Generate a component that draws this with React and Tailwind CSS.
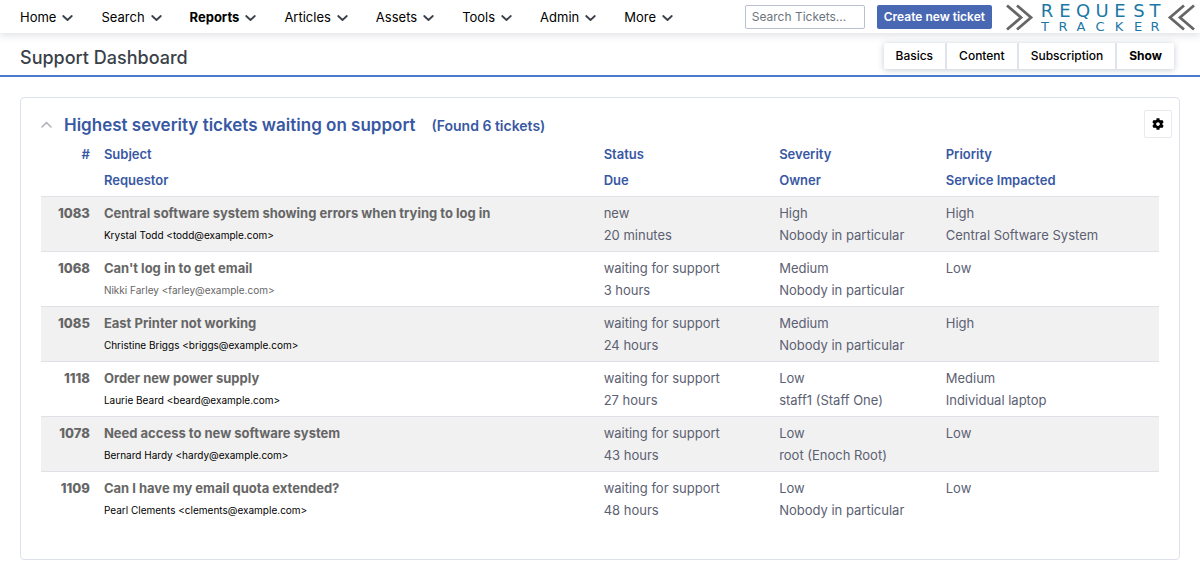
import React, { useState } from 'react';
import { FaCog } from 'react-icons/fa';

const menu = ['Home', 'Search', 'Reports', 'Articles', 'Assets', 'Tools', 'Admin', 'More'];
const pageTabs = ['Basics', 'Content', 'Subscription', 'Show'];

const tickets = [
  { id: 1083, subject: 'Central software system showing errors when trying to log in', requestor: 'Krystal Todd <todd@example.com>', status: 'new', due: '20 minutes', severity: 'High', owner: 'Nobody in particular', priority: 'High', service: 'Central Software System' },
  { id: 1068, subject: "Can't log in to get email", requestor: 'Nikki Farley <farley@example.com>', muted: true, status: 'waiting for support', due: '3 hours', severity: 'Medium', owner: 'Nobody in particular', priority: 'Low', service: '' },
  { id: 1085, subject: 'East Printer not working', requestor: 'Christine Briggs <briggs@example.com>', status: 'waiting for support', due: '24 hours', severity: 'Medium', owner: 'Nobody in particular', priority: 'High', service: '' },
  { id: 1118, subject: 'Order new power supply', requestor: 'Laurie Beard <beard@example.com>', status: 'waiting for support', due: '27 hours', severity: 'Low', owner: 'staff1 (Staff One)', priority: 'Medium', service: 'Individual laptop' },
  { id: 1078, subject: 'Need access to new software system', requestor: 'Bernard Hardy <hardy@example.com>', status: 'waiting for support', due: '43 hours', severity: 'Low', owner: 'root (Enoch Root)', priority: 'Low', service: '' },
  { id: 1109, subject: 'Can I have my email quota extended?', requestor: 'Pearl Clements <clements@example.com>', status: 'waiting for support', due: '48 hours', severity: 'Low', owner: 'Nobody in particular', priority: 'Low', service: '' },
];

function Chevron() {
  return (
    <svg className="h-2 w-[11px]" viewBox="0 0 11 8" fill="none" stroke="#3a3f4a" strokeWidth="1.8" strokeLinecap="round" strokeLinejoin="round">
      <path d="M1.2 2 L5.5 6 L9.8 2" />
    </svg>
  );
}

function Logo() {
  return (
    <svg className="mr-1 h-8 w-[192px] shrink-0" viewBox="0 0 192 32" role="img" aria-label="Request Tracker">
      <g fill="none" stroke="#666666" strokeWidth="2.8">
        <path d="M3 4.5 L17 16.5 L3 28.5" />
        <path d="M13 4.5 L27 16.5 L13 28.5" />
        <path d="M180 4.5 L166 16.5 L180 28.5" />
        <path d="M190 4.5 L176 16.5 L190 28.5" />
      </g>
      <g className="font-['DejaVu_Sans',sans-serif]" fill="#1b78a6" textAnchor="middle">
        <text fontSize="18" y="16" x="43 61 79 98 116 135 151">REQUEST</text>
        <text fontSize="13" y="30" x="41 59 77 96 115 134 151">TRACKER</text>
      </g>
    </svg>
  );
}

function TicketRows({ ticket, striped }) {
  const bg = striped ? 'bg-[#f1f1f1]' : 'bg-white';
  return (
    <tbody className={`${bg} border-t border-[#dee2e6] text-[#5b6072]`}>
      <tr>
        <td className="px-[7px] pt-[5px] text-right font-extrabold text-[#666]">{ticket.id}</td>
        <td className="px-[7px] pt-[5px] font-bold text-[#666]">
          <a href="#ticket">{ticket.subject}</a>
        </td>
        <td className="px-[7px] pt-[5px]">{ticket.status}</td>
        <td className="px-[7px] pt-[5px]">{ticket.severity}</td>
        <td className="px-[7px] pt-[5px]">{ticket.priority}</td>
      </tr>
      <tr>
        <td></td>
        <td className={`px-[7px] pb-[5px] text-[10px] leading-[22px] ${ticket.muted ? 'text-[#666]' : 'text-black'}`}>{ticket.requestor}</td>
        <td className="px-[7px] pb-[5px]">{ticket.due}</td>
        <td className="px-[7px] pb-[5px]">{ticket.owner}</td>
        <td className="px-[7px] pb-[5px]">{ticket.service}</td>
      </tr>
    </tbody>
  );
}

function App() {
  const [search, setSearch] = useState('');
  const [open, setOpen] = useState(true);

  return (
    <div className="min-h-screen bg-white font-[Inter,sans-serif] text-[13px] text-black">
      {/* Main menu */}
      <header className="relative flex h-[33px] items-center justify-between bg-white pl-5 shadow-[0_2px_8px_rgba(60,70,90,0.18)]">
        <nav className="flex items-center gap-7 pt-0.5">
          {menu.map((item) => (
            <a key={item} href="#menu" className={`flex items-center gap-[6px] ${item === 'Reports' ? 'font-bold' : ''}`}>
              {item}
              <Chevron />
            </a>
          ))}
        </nav>
        <div className="flex items-center">
          <input
            type="text"
            aria-label="Search Tickets"
            placeholder="Search Tickets..."
            value={search}
            onChange={(e) => setSearch(e.target.value)}
            className="mr-3 h-6 w-[120px] rounded-xs border border-[#b9c0d0] px-[6px] text-[12px] placeholder:text-[#6c757d]"
          />
          <button className="mr-3 h-6 rounded-xs bg-[#4868b3] px-[7px] text-[12px] font-semibold text-white">Create new ticket</button>
          <Logo />
        </div>
      </header>

      {/* Page title and tabs */}
      <div className="flex h-11 items-center justify-between border-b-2 border-[#4b7bce] pt-[3px] pr-[26px] pl-5">
        <h1 className="pt-1 text-[18px] font-medium text-[#3a3f4a]">Support Dashboard</h1>
        <nav className="flex rounded-xs bg-white shadow-[0_1px_6px_rgba(60,80,110,0.3)]">
          {pageTabs.map((tab) => (
            <a key={tab} href="#tab" className={`border-l-2 border-[#dfe3eb] px-3 text-[12px] leading-[26px] first:border-l-0 ${tab === 'Show' ? 'font-bold' : 'font-medium'}`}>
              {tab}
            </a>
          ))}
        </nav>
      </div>

      <main className="px-5 pt-5">
        <section className="rounded-sm border border-[#dee2ec] px-5 pt-3 pb-[33px]">
          <div className="-mr-[13px] mb-[3px] flex h-7 items-center">
            <button aria-label="Toggle panel" onClick={() => setOpen(!open)} className="mr-3 w-[11px]">
              <svg className="w-full" viewBox="0 0 11 7" fill="none" stroke="#adb2b9" strokeWidth="1.6" strokeLinecap="round" strokeLinejoin="round">
                <path d="M1 6 L5.5 1.5 L10 6" />
              </svg>
            </button>
            <h2 className="pt-[3px] text-[17px] font-semibold text-[#3858a3]">Highest severity tickets waiting on support</h2>
            <span className="ml-4 pt-[3px] text-[14px] font-semibold text-[#3858a3]">(Found 6 tickets)</span>
            <button aria-label="Settings" className="ml-auto flex h-7 w-7 items-center justify-center rounded-xs border border-[#eaeaea]">
              <FaCog className="h-3 w-3" />
            </button>
          </div>

          {open && (
            <table className="w-full table-fixed text-left leading-[22px]">
              <colgroup>
                <col className="w-[5%]" />
                <col className="w-[44.7%]" />
                <col className="w-[15.7%]" />
                <col className="w-[14.9%]" />
                <col />
              </colgroup>
              <thead className="leading-[26px] text-[#3858a3]">
                <tr>
                  <th className="px-[7px] text-right font-semibold">#</th>
                  <th className="px-[7px] font-semibold">Subject</th>
                  <th className="px-[7px] font-semibold">Status</th>
                  <th className="px-[7px] font-semibold">Severity</th>
                  <th className="px-[7px] font-semibold">Priority</th>
                </tr>
                <tr>
                  <th></th>
                  <th className="px-[7px] pb-[3px] font-semibold">Requestor</th>
                  <th className="px-[7px] pb-[3px] font-semibold">Due</th>
                  <th className="px-[7px] pb-[3px] font-semibold">Owner</th>
                  <th className="px-[7px] pb-[3px] font-semibold">Service Impacted</th>
                </tr>
              </thead>
              {tickets.map((ticket, i) => (
                <TicketRows key={ticket.id} ticket={ticket} striped={i % 2 === 0} />
              ))}
            </table>
          )}
        </section>
      </main>
    </div>
  );
}

export default App;
